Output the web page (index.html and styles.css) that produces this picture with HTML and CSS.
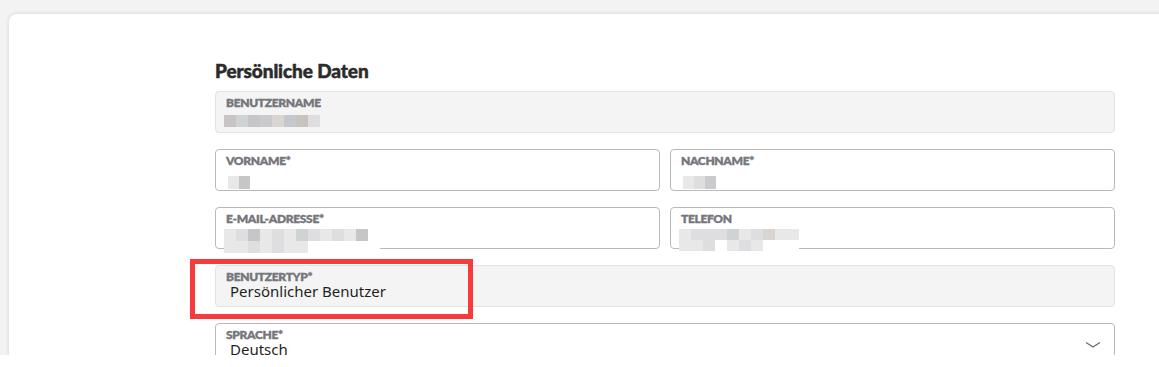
FILE: index.html
```html
<!DOCTYPE html>
<html lang="de">
<head>
<meta charset="utf-8">
<title>Persönliche Daten</title>
<link rel="stylesheet" href="styles.css">
</head>
<body>
<div class="viewport">
  <div class="card">
    <h2 class="title">Persönliche Daten</h2>
    <div class="form">
      <div class="field readonly full">
        <div class="label">BENUTZERNAME</div>
        <div class="mosaic m-user">
          <span class="c1"></span><span class="c2"></span><span class="c3"></span><span class="c4"></span><span class="c5"></span><span class="c6"></span><span class="c7"></span><span class="c8"></span>
        </div>
      </div>
      <div class="row">
        <div class="field">
          <div class="label">VORNAME*</div>
          <div class="mosaic m-small">
            <span class="c9"></span><span class="c3"></span>
          </div>
        </div>
        <div class="field">
          <div class="label">NACHNAME*</div>
          <div class="mosaic m-small">
            <span class="c9"></span><span class="c8"></span><span class="c4"></span>
          </div>
        </div>
      </div>
      <div class="row">
        <div class="field">
          <div class="label">E-MAIL-ADRESSE*</div>
          <div class="mosaic m-mail">
            <span class="c9"></span><span class="c8"></span><span class="c3"></span><span class="c9"></span><span class="c8"></span><span class="c9"></span><span class="c2"></span><span class="c8"></span><span class="c9"></span><span class="c8"></span><span class="c9"></span><span class="c3"></span><span class="c0"></span>
            <span class="c9"></span><span class="c9"></span><span class="c8"></span><span class="c9"></span><span class="c8"></span><span class="c9"></span><span class="c9"></span><span class="c0"></span><span class="c0"></span><span class="c0"></span><span class="c0"></span><span class="c0"></span><span class="c0"></span>
          </div>
        </div>
        <div class="field">
          <div class="label">TELEFON</div>
          <div class="mosaic m-tel">
            <span class="c9"></span><span class="c8"></span><span class="c8"></span><span class="c8"></span><span class="c2"></span><span class="c9"></span><span class="c8"></span><span class="c5"></span><span class="c9"></span><span class="c9"></span>
            <span class="c9"></span><span class="c9"></span><span class="c8"></span><span class="c0"></span><span class="c9"></span><span class="c8"></span><span class="c9"></span><span class="c0"></span><span class="c0"></span><span class="c0"></span>
          </div>
        </div>
      </div>
      <div class="highlight-wrap">
        <div class="field readonly full">
          <div class="label">BENUTZERTYP*</div>
          <div class="value">Persönlicher Benutzer</div>
        </div>
        <div class="highlight"></div>
      </div>
      <div class="field full select">
        <div class="label">SPRACHE*</div>
        <div class="value">Deutsch</div>
        <svg class="chevron" width="16" height="8" viewBox="0 0 16 8"><path d="M1 1.5 L8 6 L15 1.5" fill="none" stroke="#6b6b6b" stroke-width="1.3"/></svg>
      </div>
    </div>
  </div>
</div>
</body>
</html>
```

FILE: styles.css
```css
html, body {
  margin: 0;
  padding: 0;
  background: #ffffff;
}
.viewport {
  height: 355px;
  overflow: hidden;
  background: #f3f3f3;
  padding: 14px 0 0 9px;
  box-sizing: border-box;
}
.card {
  background: #ffffff;
  border-radius: 8px 0 0 0;
  box-shadow: 0 0 4px rgba(0, 0, 0, 0.14);
  margin-right: -20px;
  min-height: 400px;
  padding: 46px 0 0 206px;
  box-sizing: border-box;
}
.title {
  margin: 0 0 9px 0;
  font-family: Lato, "Liberation Sans", sans-serif;
  font-weight: 900;
  font-size: 19px;
  line-height: 22px;
  color: #2b2b2b;
  letter-spacing: -0.1px;
  -webkit-text-stroke: 0.5px #2b2b2b;
}
.form {
  width: 900px;
  display: flex;
  flex-direction: column;
  gap: 16px;
}
.row {
  display: flex;
  gap: 10px;
}
.row .field {
  flex: 1;
}
.field {
  position: relative;
  height: 42px;
  box-sizing: border-box;
  border: 1px solid #b9b9b9;
  border-radius: 4px;
  background: #ffffff;
  padding: 4px 10px 0 10px;
}
.field.readonly {
  background: #f4f4f4;
  border-color: #e2e2e2;
}
.label {
  font-family: Lato, "Liberation Sans", sans-serif;
  font-weight: 800;
  font-size: 12px;
  line-height: 14px;
  color: #76767d;
  letter-spacing: -0.35px;
  -webkit-text-stroke: 0.3px #76767d;
}
.value {
  font-family: "Noto Sans", "Open Sans", sans-serif;
  font-size: 15px;
  line-height: 15px;
  color: #1f1f1f;
  padding-left: 4px;
}
.mosaic {
  display: grid;
  grid-auto-rows: 12px;
  margin-top: 5px;
  width: max-content;
  filter: blur(0.4px);
  border-radius: 6px 0 0 6px;
}
.mosaic span {
  width: 12px;
  height: 12px;
  display: block;
}
.m-user {
  grid-template-columns: repeat(8, 12px);
  margin-left: -2px;
}
.m-small {
  grid-template-columns: repeat(3, 11px);
  margin-left: 2px;
  margin-top: 8px;
  border-radius: 8px;
}
.m-small span { width: 11px; height: 13px; }
.m-mail {
  grid-template-columns: repeat(13, 12px);
  grid-auto-rows: 12px;
  margin-left: -2px;
  margin-top: 3px;
  border-radius: 10px 0 0 10px;
}
.m-tel {
  grid-template-columns: repeat(10, 12px);
  grid-auto-rows: 11px;
  margin-left: -2px;
  margin-top: 3px;
  border-radius: 10px 0 0 10px;
}
.m-tel span { height: 11px; }
.c0 { background: #ffffff; }
.c1 { background: #c9c4c4; }
.c2 { background: #cfd3d3; }
.c3 { background: #c6c6c8; }
.c4 { background: #cacacc; }
.c5 { background: #d9d5d3; }
.c6 { background: #c4c8cd; }
.c7 { background: #c8c3c1; }
.c8 { background: #dedee0; }
.c9 { background: #e8e8e9; }
.highlight-wrap {
  position: relative;
}
.highlight {
  position: absolute;
  left: -25px;
  top: -6px;
  width: 283px;
  height: 60px;
  box-sizing: border-box;
  border: 5px solid #f83a3a;
  pointer-events: none;
}
.select .chevron {
  position: absolute;
  right: 13px;
  top: 17px;
}
```
